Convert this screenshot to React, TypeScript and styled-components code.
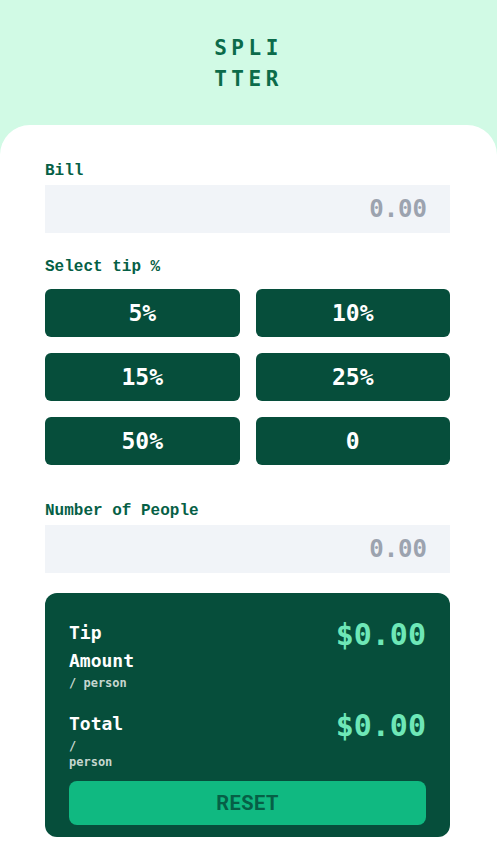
import React from "react";
import styled, { createGlobalStyle } from "styled-components";

const Global = createGlobalStyle`
  html, body { margin: 0; padding: 0; background: #d1fae5; }
  body { font-family: "DejaVu Sans Mono", monospace; }
  * { box-sizing: border-box; }
`;

const Page = styled.div`
  min-height: 850px;
  background: #d1fae5;
  display: flex;
  flex-direction: column;
`;

const Header = styled.header`
  height: 125px;
  display: flex;
  align-items: flex-start;
  justify-content: center;
  padding-top: 33px;
`;

const Logo = styled.h1`
  margin: 0;
  font-family: "DejaVu Sans Mono", monospace;
  font-weight: 700;
  font-size: 21px;
  line-height: 31px;
  letter-spacing: 4.5px;
  color: #0b6b4a;
  text-align: left;
  padding-left: 0;
`;

const Card = styled.main`
  flex: 1;
  background: #ffffff;
  border-radius: 30px 30px 0 0;
  padding: 36px 47px 13px 45px;
  display: flex;
  flex-direction: column;
`;

const Label = styled.label<{ $mt?: number }>`
  display: block;
  font-family: "Liberation Mono", "DejaVu Sans Mono", monospace;
  font-weight: 700;
  font-size: 16px;
  line-height: 20px;
  color: #065f46;
  margin-top: ${(p) => p.$mt ?? 0}px;
  margin-bottom: 4px;
`;

const Field = styled.div`
  height: 48px;
  background: #f1f4f8;
  display: flex;
  align-items: center;
  justify-content: flex-end;
  padding-right: 23px;
  font-family: "DejaVu Sans Mono", monospace;
  font-weight: 700;
  font-size: 24px;
  color: #9ca3af;
`;

const TipGrid = styled.div`
  margin-top: 8px;
  display: grid;
  grid-template-columns: 1fr 1fr;
  gap: 16px;
`;

const TipButton = styled.button`
  height: 48px;
  border: none;
  border-radius: 6px;
  background: #064e3b;
  color: #ffffff;
  font-family: "DejaVu Sans Mono", monospace;
  font-weight: 700;
  font-size: 23px;
  padding: 0;
`;

const Panel = styled.section`
  margin-top: 20px;
  background: #064e3b;
  border-radius: 12px;
  padding: 26px 24px 12px 24px;
  display: flex;
  flex-direction: column;
`;

const ResultRow = styled.div<{ $mt?: number }>`
  display: flex;
  justify-content: space-between;
  align-items: flex-start;
  margin-top: ${(p) => p.$mt ?? 0}px;
`;

const ResultLabel = styled.div`
  width: min-content;
  display: flex;
  flex-direction: column;
`;

const ResultTitle = styled.div`
  font-family: "DejaVu Sans Mono", monospace;
  font-weight: 700;
  font-size: 18px;
  line-height: 28px;
  color: #ffffff;
`;

const ResultSub = styled.div`
  font-family: "DejaVu Sans Mono", monospace;
  font-weight: 700;
  font-size: 12px;
  line-height: 16px;
  color: #c5d6cf;
`;

const Amount = styled.div`
  font-family: "DejaVu Sans Mono", monospace;
  font-weight: 700;
  font-size: 30px;
  line-height: 36px;
  color: #6ee7b7;
  margin-top: -2px;
`;

const Reset = styled.button`
  margin-top: 11px;
  height: 44px;
  border: none;
  border-radius: 8px;
  background: #10b981;
  color: #065f46;
  font-family: "Roboto", "Liberation Sans", sans-serif;
  font-weight: 700;
  font-size: 20px;
  letter-spacing: 0.5px;
`;

const tips = ["5%", "10%", "15%", "25%", "50%", "0"];

export default function App() {
  return (
    <Page>
      <Global />
      <Header>
        <Logo>
          SPLI
          <br />
          TTER
        </Logo>
      </Header>
      <Card>
        <Label>Bill</Label>
        <Field>0.00</Field>
        <Label $mt={24}>Select tip %</Label>
        <TipGrid>
          {tips.map((t) => (
            <TipButton key={t}>{t}</TipButton>
          ))}
        </TipGrid>
        <Label $mt={36}>Number of People</Label>
        <Field>0.00</Field>
        <Panel>
          <ResultRow>
            <ResultLabel>
              <ResultTitle>Tip Amount</ResultTitle>
              <ResultSub>/&nbsp;person</ResultSub>
            </ResultLabel>
            <Amount>$0.00</Amount>
          </ResultRow>
          <ResultRow $mt={19}>
            <ResultLabel>
              <ResultTitle>Total</ResultTitle>
              <ResultSub>/ person</ResultSub>
            </ResultLabel>
            <Amount>$0.00</Amount>
          </ResultRow>
          <Reset>RESET</Reset>
        </Panel>
      </Card>
    </Page>
  );
}
